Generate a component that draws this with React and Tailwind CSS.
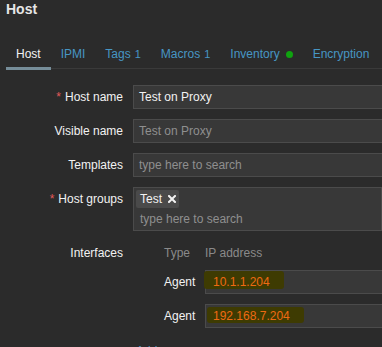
import React from 'react'

const tabs = [
  { name: 'Host', active: true },
  { name: 'IPMI' },
  { name: 'Tags', count: '1' },
  { name: 'Macros', count: '1' },
  { name: 'Inventory', dot: true },
  { name: 'Encryption' },
]

const inputCls = 'h-[24px] w-[300px] border border-[#4b4b4b] bg-[#383838] px-[5px] flex items-center leading-[14px]'

export default function App() {
  return (
    <div className="w-[382px] h-[347px] overflow-hidden bg-[#2b2b2b] font-['Liberation_Sans',Arial,sans-serif] text-[12px] text-[#f2f2f2]">
      <h1 className="pl-[6px] pt-[1px] text-[14px] font-bold leading-[16px] text-[#e6e6e6]">Host</h1>

      <div className="mt-[27px] ml-[6px] flex border-b border-[#3a3a3a]">
        {tabs.map((t) => (
          <div
            key={t.name}
            className={
              t.active
                ? 'px-[10px] pt-[3px] pb-[6px] -mb-[2px] leading-[14px] border-b-[3px] border-[#768d99] text-[#f2f2f2]'
                : 'px-[10px] pt-[3px] pb-[9px] -mb-[2px] leading-[14px] text-[#4796c4] flex items-start'
            }
          >
            {t.name}
            {t.count && <span className="ml-[4px] text-[11px]">{t.count}</span>}
            {t.dot && <span className="ml-[6px] mt-[4px] inline-block w-[7px] h-[7px] rounded-full bg-[#0fa30f]" />}
          </div>
        ))}
      </div>

      <div className="mt-[16px] flex flex-col gap-[10px]">
        <FormRow label="Host name" required>
          <div className={inputCls}>Test on Proxy</div>
        </FormRow>
        <FormRow label="Visible name">
          <div className={inputCls + ' text-[#8f8f8f]'}>Test on Proxy</div>
        </FormRow>
        <FormRow label="Templates">
          <div className={inputCls + ' text-[#8f8f8f]'}>type here to search</div>
        </FormRow>

        <div className="flex">
          <div className="w-[123px] shrink-0 text-right pt-[5px] leading-[14px]">
            <span className="text-[#e45959] mr-[4px]">*</span>Host groups
          </div>
          <div className="ml-[10px] h-[44px] w-[300px] border border-[#4b4b4b] bg-[#383838] pl-[2px] pt-[2px]">
            <div className="inline-flex items-center h-[18px] bg-[#4a4a4a] pl-[4px] pr-[3px] rounded-[2px] leading-[14px]">
              Test
              <svg className="ml-[6px]" width="8" height="8" viewBox="0 0 8 8">
                <path d="M1 1L7 7M7 1L1 7" stroke="#f2f2f2" strokeWidth="2" strokeLinecap="square" />
              </svg>
            </div>
            <div className="pl-[4px] pt-[4px] leading-[14px] text-[#8f8f8f]">type here to search</div>
          </div>
        </div>

        <div className="flex">
          <div className="w-[123px] shrink-0 text-right pt-[1px] leading-[22px]">Interfaces</div>
          <div className="ml-[10px]">
            <div className="flex pl-[31px] pt-[1px] leading-[22px] text-[#8a8a8a]">
              <div className="w-[31px]">Type</div>
              <div className="ml-[10px]">IP address</div>
            </div>
            <div className="mt-[6px] flex flex-col gap-[10px]">
              <AgentRow ip="10.1.1.204" mark="w-[80px] top-[0px] h-[18px] -left-[2px]" />
              <AgentRow ip="192.168.7.204" mark="w-[97px] top-[2px] h-[16px] left-[1px]" />
            </div>
            <div className="mt-[16px] pl-[3px] leading-[14px] text-[#4796c4]">Add</div>
          </div>
        </div>
      </div>
    </div>
  )
}

function FormRow({ label, required, children }) {
  return (
    <div className="flex">
      <div className="w-[123px] shrink-0 text-right leading-[24px]">
        {required && <span className="text-[#e45959] mr-[4px]">*</span>}
        {label}
      </div>
      <div className="ml-[10px]">{children}</div>
    </div>
  )
}

function AgentRow({ ip, mark }) {
  return (
    <div className="flex pl-[31px] items-center">
      <div className="w-[31px] leading-[14px]">Agent</div>
      <div className="ml-[10px] relative h-[24px] w-[200px] border border-[#4b4b4b] bg-[#383838] flex items-center">
        <span className={'absolute rounded-[3px] bg-[#3e3b02] ' + mark} />
        <span className="relative pl-[7px] text-[#ee6a12] leading-[14px]">{ip}</span>
      </div>
    </div>
  )
}
